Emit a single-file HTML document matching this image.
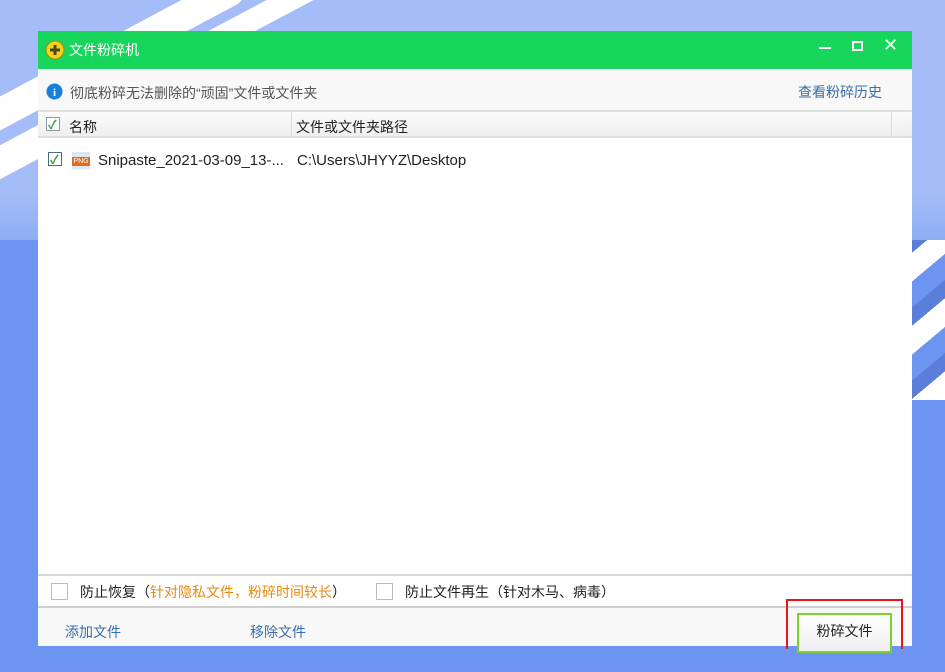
<!DOCTYPE html>
<html><head><meta charset="utf-8"><style>
*{margin:0;padding:0;box-sizing:border-box}
body{width:945px;height:672px;overflow:hidden;position:relative;background:#6b95f0;font-family:"Liberation Sans","Noto Sans CJK SC",sans-serif;font-size:14px;color:#222}
.bgtop{position:absolute;left:0;top:0;width:945px;height:240px;background:linear-gradient(#a4bdf8 0,#a4bdf8 80%,#8eadf5 100%)}
.s{position:absolute;background:#fff;border-radius:20px;transform:rotate(-28deg)}
.win{position:absolute;left:38px;top:31px;width:874px;height:615px;background:#fff}
.title{height:38px;background:#18d65c;color:#fff;position:relative}
.title .t{position:absolute;left:31px;top:9px;font-size:14px}
.tb{height:43px;background:#f8f8f8;border-bottom:2px solid #e0e0e0;position:relative;color:#555}
.hdr{height:26px;background:linear-gradient(#fafafa,#efefef);border-bottom:2px solid #ddd;position:relative}
.cb{position:absolute;width:14px;height:14px;border:1px solid #8a9aa8;background:#fff}
.chk{color:#2aa035;font-size:12px;position:absolute;left:1px;top:-2px;font-weight:bold}
.bot1{position:absolute;left:0;top:543px;width:874px;height:33px;border-top:2px solid #d8d8d8;background:#fff}
.bot2{position:absolute;left:0;top:575px;width:874px;height:40px;border-top:2px solid #d0d0d0;background:#f8f8f8}
.lnk{color:#3a6ea8;position:absolute}
</style></head><body>
<div class="bgtop"></div>
<div class="s" style="left:-40px;top:40px;width:300px;height:30px"></div>
<div class="s" style="left:-60px;top:110px;width:260px;height:30px"></div>
<div class="s" style="left:180px;top:5px;width:160px;height:22px"></div>
<div style="position:absolute;left:912px;top:240px;width:33px;height:160px;background:repeating-linear-gradient(-40deg,#fff 0 22px,#5b7fd8 22px 36px,#6b95f0 36px 56px)"></div>
<div class="win">
 <div class="title">
  <svg style="position:absolute;left:7px;top:9px" width="20" height="20" viewBox="0 0 20 20"><circle cx="10" cy="10" r="9" fill="#f4d11c" stroke="#9a8a10"/><path d="M10 5v10M5 10h10" stroke="#4a4a10" stroke-width="3"/></svg>
  <span class="t">文件粉碎机</span>
  <div style="position:absolute;left:781px;top:16px;width:12px;height:2px;background:#fff"></div>
  <div style="position:absolute;left:814px;top:10px;width:11px;height:10px;border:2px solid #fff"></div>
  <div style="position:absolute;left:845px;top:4px;color:#fff;font-size:18px">✕</div>
 </div>
 <div class="tb">
  <svg style="position:absolute;left:8px;top:14px" width="17" height="17"><circle cx="8.5" cy="8.5" r="8" fill="#1a7fd8"/><text x="8.5" y="13" fill="#fff" font-size="11" font-weight="bold" text-anchor="middle" font-family="Liberation Serif">i</text></svg>
  <span style="position:absolute;left:32px;top:14px">彻底粉碎无法删除的“顽固”文件或文件夹</span>
  <span class="lnk" style="left:760px;top:13px">查看粉碎历史</span>
 </div>
 <div class="hdr">
  <div class="cb" style="left:8px;top:5px"><span class="chk">✓</span></div>
  <span style="position:absolute;left:31px;top:5px">名称</span>
  <div style="position:absolute;left:253px;top:0;width:1px;height:24px;background:#ddd"></div>
  <span style="position:absolute;left:258px;top:5px">文件或文件夹路径</span>
  <div style="position:absolute;left:853px;top:0;width:1px;height:24px;background:#ddd"></div>
 </div>
 <div style="position:relative;height:30px">
  <div class="cb" style="left:10px;top:14px;border-color:#4a6a88"><span class="chk">✓</span></div>
  <div style="position:absolute;left:34px;top:14px;width:18px;height:17px;background:#e0e6ee"><div style="position:absolute;left:0;top:5px;width:18px;height:9px;background:#e06a20;color:#fff;font-size:7px;line-height:9px;text-align:center">PNG</div></div>
  <span style="position:absolute;left:60px;top:14px;font-size:15px">Snipaste_2021-03-09_13-...</span>
  <span style="position:absolute;left:259px;top:14px;font-size:15px">C:\Users\JHYYZ\Desktop</span>
 </div>
 <div class="bot1">
  <div class="cb" style="left:13px;top:7px;width:17px;height:17px;border-color:#bbb"></div>
  <span style="position:absolute;left:42px;top:6px">防止恢复（<span style="color:#e88a10">针对隐私文件，粉碎时间较长</span>）</span>
  <div class="cb" style="left:338px;top:7px;width:17px;height:17px;border-color:#bbb"></div>
  <span style="position:absolute;left:367px;top:6px">防止文件再生（针对木马、病毒）</span>
 </div>
 <div class="bot2">
  <span class="lnk" style="left:27px;top:14px">添加文件</span>
  <span class="lnk" style="left:212px;top:14px">移除文件</span>
  <div style="position:absolute;left:759px;top:5px;width:95px;height:40px;border:2px solid #7ed02c;background:linear-gradient(#fff,#eee);text-align:center;line-height:32px">粉碎文件</div>
 </div>
</div>
<div style="position:absolute;left:786px;top:599px;width:117px;height:50px;border:2px solid #e8141e;border-bottom:none"></div>
</body></html>
